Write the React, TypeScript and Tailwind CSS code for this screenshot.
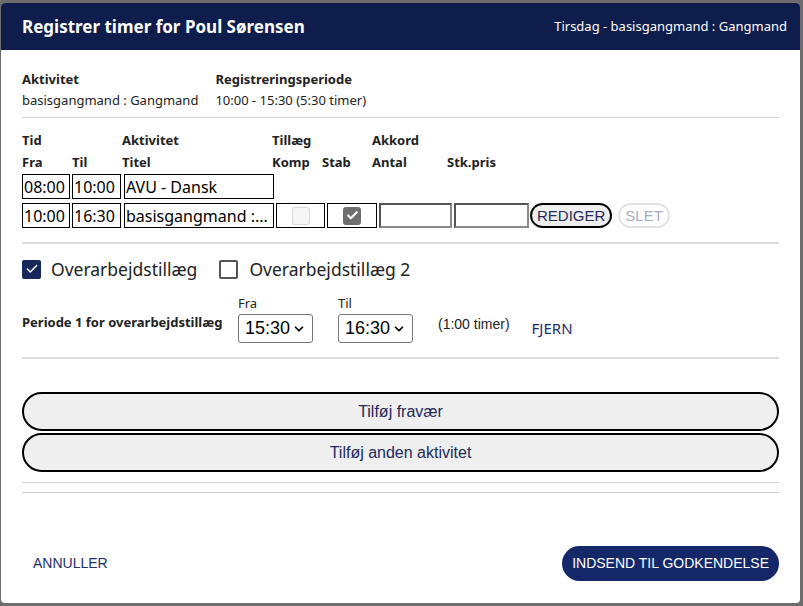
import { Check, ChevronDown } from "lucide-react";

const noto = { fontFamily: "'Noto Sans', 'Open Sans', sans-serif" };
const arial = { fontFamily: "'Liberation Sans', Arial, sans-serif" };

function Cell({ w, children }: { w: string; children?: React.ReactNode }) {
  return (
    <div className={`${w} h-[25px] border-[1.5px] border-black bg-white flex items-center px-[1px] text-[16px] text-black whitespace-nowrap overflow-hidden leading-none`}>
      {children}
    </div>
  );
}

function TimeSelect({ value }: { value: string }) {
  return (
    <div
      className="w-[75px] h-[29px] border border-[#767676] rounded-[3px] bg-white flex items-center justify-between px-[6px] text-[18px] text-black"
      style={arial}
    >
      <span>{value}</span>
      <ChevronDown className="w-[14px] h-[14px]" strokeWidth={3} />
    </div>
  );
}

export default function App() {
  return (
    <div className="w-[803px] h-[606px] bg-[#6d6d6d] pt-[3px] pl-[1px]" style={noto}>
      <div className="w-[799px] h-[600px] bg-white rounded-[4px] overflow-hidden flex flex-col">
        {/* Header */}
        <div className="h-[47px] bg-[#0e1d4b] flex items-center justify-between pl-[21px] pr-[13px] text-white">
          <h2 className="text-[17px] font-bold">Registrer timer for Poul Sørensen</h2>
          <span className="text-[13px]">Tirsdag - basisgangmand : Gangmand</span>
        </div>

        <div className="px-[21px] flex-1 flex flex-col text-[13px] text-[#222]">
          {/* Info */}
          <div className="flex gap-[17px] pt-[19px] pb-[6px] border-b border-[#cfcfcf] leading-[21px]">
            <div>
              <div className="font-bold">Aktivitet</div>
              <div>basisgangmand : Gangmand</div>
            </div>
            <div>
              <div className="font-bold">Registreringsperiode</div>
              <div>10:00 - 15:30 (5:30 timer)</div>
            </div>
          </div>

          {/* Table */}
          <div className="pt-[11px] pb-[14px] border-b-2 border-[#dcdcdc]">
            <div className="flex font-bold leading-[22px]">
              <span className="w-[100px]">Tid</span>
              <span className="w-[150px]">Aktivitet</span>
              <span className="w-[100px]">Tillæg</span>
              <span>Akkord</span>
            </div>
            <div className="flex font-bold leading-[22px]">
              <span className="w-[50px]">Fra</span>
              <span className="w-[50px]">Til</span>
              <span className="w-[150px]">Titel</span>
              <span className="w-[50px]">Komp</span>
              <span className="w-[50px]">Stab</span>
              <span className="w-[75px]">Antal</span>
              <span>Stk.pris</span>
            </div>
            <div className="flex gap-[2px] mt-[1px]">
              <Cell w="w-[48px]">08:00</Cell>
              <Cell w="w-[49px]">10:00</Cell>
              <Cell w="w-[150px] ml-[1px]">AVU - Dansk</Cell>
            </div>
            <div className="flex gap-[2px] mt-[4px] items-center">
              <Cell w="w-[48px]">10:00</Cell>
              <Cell w="w-[49px]">16:30</Cell>
              <Cell w="w-[150px] ml-[1px]">basisgangmand :...</Cell>
              <Cell w="w-[49px] justify-center">
                <span className="w-[18px] h-[18px] rounded-[3px] border border-[#d8d8d8] bg-[#f6f6f6]" />
              </Cell>
              <Cell w="w-[50px] justify-center">
                <span className="w-[18px] h-[18px] rounded-[3px] bg-[#6f6f6f] flex items-center justify-center">
                  <Check className="w-[13px] h-[13px] text-white" strokeWidth={4} />
                </span>
              </Cell>
              <div className="w-[73px] h-[25px] border-2 border-t-[#555] border-l-[#555] border-r-[#8a8a8a] border-b-[#8a8a8a] bg-white" />
              <div className="w-[75px] h-[25px] border-2 border-t-[#555] border-l-[#555] border-r-[#8a8a8a] border-b-[#8a8a8a] bg-white" />
              <button
                className="h-[25px] px-[5px] -ml-[1px] rounded-full border-2 border-black bg-[#efefef] text-[15px] text-[#1f2a5a] leading-none"
                style={arial}
              >
                REDIGER
              </button>
              <button
                className="h-[25px] px-[5px] ml-[4px] rounded-full border-2 border-[#e2e2e2] bg-white text-[15px] text-[#a9adbd] leading-none"
                style={arial}
              >
                SLET
              </button>
            </div>
          </div>

          {/* Overtime */}
          <div className="pt-[14px] pb-[14px] border-b-2 border-[#dcdcdc]">
            <div className="flex items-center text-[17.5px] text-[#222] h-[22px]">
              <span className="w-[19px] h-[19px] rounded-[2px] bg-[#16275c] flex items-center justify-center">
                <Check className="w-[14px] h-[14px] text-white" strokeWidth={2.5} />
              </span>
              <span className="ml-[10px]">Overarbejdstillæg</span>
              <span className="w-[19px] h-[19px] rounded-[2px] border-2 border-[#555] ml-[22px]" />
              <span className="ml-[11px]">Overarbejdstillæg 2</span>
            </div>
            <div className="flex items-end mt-[12px]">
              <div className="w-[216px] font-bold text-[13px] pb-[11px]">Periode 1 for overarbejdstillæg</div>
              <div className="w-[100px]">
                <div className="text-[13px] leading-[22px]">Fra</div>
                <TimeSelect value="15:30" />
              </div>
              <div className="w-[100px]">
                <div className="text-[13px] leading-[22px]">Til</div>
                <TimeSelect value="16:30" />
              </div>
              <span className="pb-[8px] text-[14px] text-[#222]" style={arial}>(1:00 timer)</span>
              <span className="pb-[4px] ml-[22px] text-[15px] text-[#1f2a6b]">FJERN</span>
            </div>
          </div>

          {/* Add buttons */}
          <div className="pt-[33px] pb-[10px] border-b border-[#cfcfcf] flex flex-col gap-[2px]">
            <button
              className="h-[39px] rounded-full border-2 border-black bg-[#efefef] text-[16px] text-[#22295a]"
              style={arial}
            >
              Tilføj fravær
            </button>
            <button
              className="h-[39px] rounded-full border-2 border-black bg-[#efefef] text-[16px] text-[#22295a]"
              style={arial}
            >
              Tilføj anden aktivitet
            </button>
          </div>
          <div className="h-[10px] border-b border-[#cfcfcf]" />

          {/* Footer */}
          <div className="flex-1 flex items-end justify-between pl-[11px] pb-[22px]">
            <span className="text-[14px] text-[#22306a] leading-[35px]" style={arial}>ANNULLER</span>
            <button
              className="h-[35px] px-[10px] rounded-full bg-[#142869] text-white text-[14px]"
              style={arial}
            >
              INDSEND TIL GODKENDELSE
            </button>
          </div>
        </div>
      </div>
    </div>
  );
}
